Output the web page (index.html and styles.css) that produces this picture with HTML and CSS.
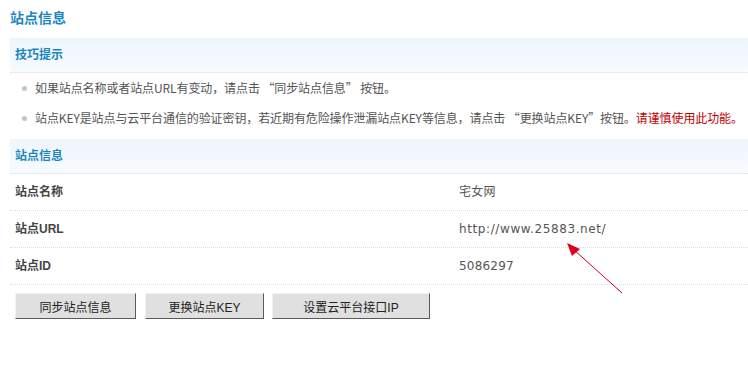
FILE: index.html
```html
<!DOCTYPE html>
<html lang="zh-CN">
<head>
    <meta charset="UTF-8">
    <title>站点信息</title>
    <link rel="stylesheet" href="styles.css">
</head>
<body>
    <div class="page">
        <h1 class="title">站点信息</h1>

        <div class="bar"><span>技巧提示</span></div>
        <ul class="tips">
            <li>如果站点名称或者站点URL有变动，请点击 “同步站点信息” 按钮。</li>
            <li>站点KEY是站点与云平台通信的验证密钥，若近期有危险操作泄漏站点KEY等信息，请点击 “更换站点KEY”按钮。<em class="warn">请谨慎使用此功能。</em></li>
        </ul>

        <div class="bar"><span>站点信息</span></div>
        <div class="info">
            <div class="row"><span class="label">站点名称</span><span class="value">宅女网</span></div>
            <div class="row"><span class="label">站点URL</span><span class="value url">http://www.25883.net/</span></div>
            <div class="row"><span class="label">站点ID</span><span class="value">5086297</span></div>
        </div>

        <div class="actions">
            <button class="btn btn-sync">同步站点信息</button>
            <button class="btn btn-key">更换站点KEY</button>
            <button class="btn btn-ip">设置云平台接口IP</button>
        </div>

        <!-- annotation arrow drawn over the page -->
        <svg class="arrow" width="70" height="60" viewBox="0 0 70 60">
            <line x1="61" y1="54" x2="12" y2="10" stroke="#c8001c" stroke-width="1"/>
            <polygon points="6,4 19,10 11,17" fill="#e0001a"/>
        </svg>
    </div>
</body>
</html>
```

FILE: styles.css
```css
body {
    margin: 0;
    background: #fff;
    font-family: "Liberation Sans", "Noto Sans CJK SC", sans-serif;
    font-size: 12px;
    color: #555;
}
.page {
    position: relative;
    padding: 0 0 0 10px;
}
.title {
    margin: 0;
    height: 38px;
    line-height: 36px;
    font-size: 14px;
    font-weight: bold;
    color: #1a86c0;
}
.bar {
    height: 34px;
    line-height: 34px;
    padding-left: 5px;
    background: linear-gradient(#edf5fd, #f8fbff);
    border-bottom: 1px dotted #dde3ea;
}
.bar span {
    font-weight: bold;
    color: #1a86c0;
}
.tips {
    margin: 0;
    padding: 0 0 6px 25px;
    list-style: none;
    font-family: "Noto Sans CJK SC", "Liberation Sans", sans-serif;
    letter-spacing: -0.1px;
    white-space: nowrap;
}
.tips li {
    position: relative;
    line-height: 30px;
}
.tips li::before {
    content: "";
    position: absolute;
    left: -13px;
    top: 13px;
    width: 5px;
    height: 5px;
    border-radius: 50%;
    background: #c4c4c4;
}
.warn {
    font-style: normal;
    color: #c00000;
}
.row {
    display: flex;
    height: 36px;
    line-height: 36px;
    padding-left: 5px;
    border-bottom: 1px dotted #dcdcdc;
}
.label {
    width: 444px;
    font-weight: bold;
    color: #444;
}
.value {
    font-family: "DejaVu Sans", "Noto Sans CJK SC", sans-serif;
    letter-spacing: 0.2px;
}
.url {
    letter-spacing: 0.6px;
}
.actions {
    display: flex;
    gap: 9px;
    padding: 8px 0 0 5px;
}
.btn {
    height: 26px;
    padding: 0;
    font-family: inherit;
    font-size: 12px;
    color: #222;
    background: #e0e0e0;
    border: 1px solid;
    border-color: #f2f2f2 #5a5a5a #5a5a5a #f2f2f2;
}
.btn-sync { width: 121px; }
.btn-key { width: 119px; margin-right: -1px; }
.btn-ip { width: 158px; }
.arrow {
    position: absolute;
    left: 561px;
    top: 239px;
}
```
